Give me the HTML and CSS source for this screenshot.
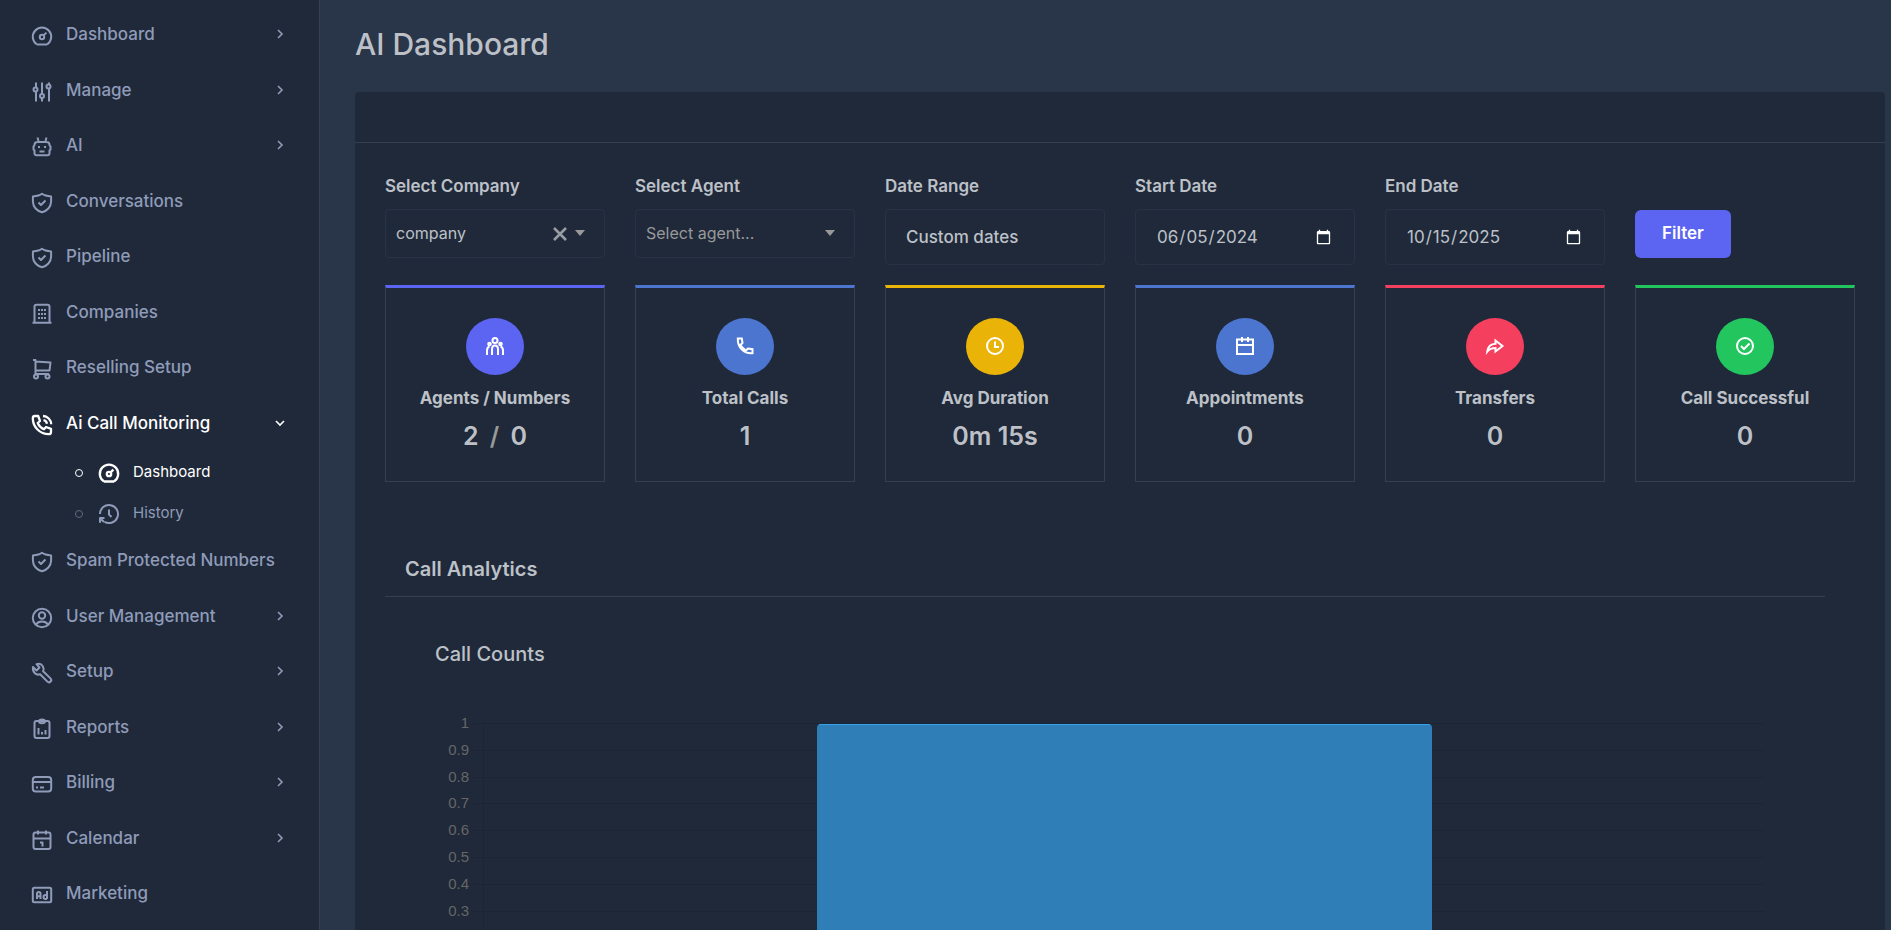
FILE: index.html
```html
<!DOCTYPE html>
<html lang="en">
<head>
<meta charset="utf-8">
<meta name="viewport" content="width=device-width, initial-scale=1">
<title>AI Dashboard</title>
<link rel="stylesheet" href="styles.css">
</head>
<body>
<svg class="sprite" aria-hidden="true">
  <symbol id="gauge" viewBox="0 0 24 24"><path d="M7 20.500h10M7 20.500A9.200 9.200 0 1 1 17 20.500"/><circle cx="12" cy="13" r="2.200"/><path d="m13.600 11.400 2.800-2.800"/></symbol>
  <symbol id="sliders" viewBox="0 0 24 24"><path d="M6 2.500v5M6 11.500V21.500M12 2.500V14M12 18v3.500M19 2.500v2M19 8.500V21.500"/><circle cx="5.500" cy="9.500" r="2"/><circle cx="12" cy="16" r="2"/><circle cx="18.500" cy="6.500" r="2"/></symbol>
  <symbol id="robot" viewBox="0 0 24 24"><path d="M7.500 2.500 8.500 6M16.500 2.500 15.500 6M7.500 7h9a3 3 0 0 1 3 3l1 1.500v3l-1 1v3a1.800 1.800 0 0 1-1.800 1.800H6.300a1.800 1.800 0 0 1-1.800-1.800V15.500l-1-1v-3l1-1.500a3 3 0 0 1 3-3z"/><path d="M8 12h2M14 12h2M9.500 16.500h5"/></symbol>
  <symbol id="shield" viewBox="0 0 24 24"><path d="M12 2.800C9.800 4.600 6.500 5.200 2.900 5.400v5.200c0 5.400 4.200 9.400 9.100 10.600 4.900-1.200 9.100-5.200 9.100-10.600V5.400C17.500 5.200 14.200 4.600 12 2.800z"/><path d="m8.500 11.500 2.500 2.500 4.500-4.500"/></symbol>
  <symbol id="building" viewBox="0 0 24 24"><path d="M2.500 20.800h19M4.500 20.500v-16A1.800 1.800 0 0 1 6.300 2.800h11.400a1.800 1.800 0 0 1 1.800 1.700v16"/><path d="M8 8h2M11 8h2M14 8h2M8 12h2M11 12h2M14 12h2M8 16h2M11 16h2M14 16h2"/></symbol>
  <symbol id="cart" viewBox="0 0 24 24"><path d="M3 3h2.500v13.500M5.500 4.500 20.500 5.500 19.500 13.500H5.500M4.500 17H19"/><circle cx="6" cy="19.500" r="2"/><circle cx="17.500" cy="19.500" r="2"/></symbol>
  <symbol id="callwave" viewBox="0 0 24 24"><path d="M5 3h3.200l1.800 5-2.300 2c1.200 3 3.300 5 6.300 6.300l2-2.300 5 1.800V19c0 1.200-1 2.200-2.200 2.200C10 21.200 2.800 14 2.800 5.200 2.800 4 3.800 3 5 3zM13 3a8.500 8.500 0 0 1 8.200 8.200M13.500 7.200a4.500 4.500 0 0 1 3.500 3.500"/></symbol>
  <symbol id="history" viewBox="0 0 24 24"><path d="M3 12a9 9 0 1 1 4.500 7.800M7.500 16H3v4.800M3.500 16.500 7 20M12 7.500v5l2.500 2.500"/></symbol>
  <symbol id="user" viewBox="0 0 24 24"><circle cx="12" cy="12" r="9.200"/><circle cx="12" cy="9.500" r="3.200"/><path d="M6 18.500c1.300-2 3.500-3 6-3s4.700 1 6 3"/></symbol>
  <symbol id="wrench" viewBox="0 0 24 24"><path d="m3 6 3.500 3.500L9.500 6.500 6.500 3.200C9 2.200 11.500 3 12.800 5.200c1 1.700 1 3.400.3 5l7.400 7.200a2.200 2.200 0 0 1-3.100 3.200l-7.300-7.400c-3.600 1.500-8-1.700-7.100-7.200z"/></symbol>
  <symbol id="report" viewBox="0 0 24 24"><rect x="4.500" y="4" width="15" height="17" rx="2"/><path d="M9 4.500c0-1.200 1.200-2 3-2s3 .8 3 2-1.200 1.800-3 1.800-3-.6-3-1.800zM8.500 11v6.500M12 15v2.500M15.500 13v4.500"/></symbol>
  <symbol id="wallet" viewBox="0 0 24 24"><rect x="2.800" y="5" width="18.400" height="14.500" rx="3"/><path d="M3 10h18M6 15.500h2M10 15.500h4"/></symbol>
  <symbol id="calendar1" viewBox="0 0 24 24"><rect x="3.500" y="4.500" width="17" height="16.500" rx="2"/><path d="M8 2.500v4M16 2.500v4M3.500 10.500h17M10 14.500H12.500v4"/></symbol>
  <symbol id="ad" viewBox="0 0 24 24"><rect x="2.800" y="4.800" width="18.400" height="14.500" rx="1.500"/><path d="M7 16v-5.500c0-2 3.500-2 3.500 0V16M7 13.200h3.500M17 8v8M17 12h-1.500a2 2 0 0 0 0 4H17"/></symbol>
  <symbol id="chevron" viewBox="0 0 12 12"><path d="m4 2 4 4-4 4"/></symbol>
  <symbol id="caret" viewBox="0 0 10 6"><path d="M0 0h10L5 6z"/></symbol>
  <symbol id="cross" viewBox="0 0 14 14"><path d="m1 1 12 12M13 1 1 13"/></symbol>
  <symbol id="people" viewBox="0 0 24 24"><circle cx="12" cy="6.500" r="2.500"/><path d="M9 21v-5.500C9 13 10 11.500 12 11.500s3 1.500 3 4V21M6.500 12.500C4.700 13 4 14.500 4 16.500V21M17.500 12.500c1.800.5 2.500 2 2.500 4V21"/><circle cx="6.500" cy="10" r="1.300"/><circle cx="17.500" cy="10" r="1.300"/></symbol>
  <symbol id="phone" viewBox="0 0 24 24"><path d="M4.800 4.500h4L9.500 9l-2 2c1.500 2.500 3 4 5.500 5.500l2-2 4.500.7v4C11 20 4.500 13.500 4.800 4.500z"/></symbol>
  <symbol id="clock" viewBox="0 0 24 24"><circle cx="12" cy="12" r="8"/><path d="M12 7.500V13h4"/></symbol>
  <symbol id="calendar" viewBox="0 0 24 24"><path d="M4 5.500h16V20H4zM4 11h16M9 3v5M15 3v5"/></symbol>
  <symbol id="forward" viewBox="0 0 24 24"><path d="M12.500 6.500 19.500 12l-7 5.500V14c-4 0-6 .8-8.200 3.500C5 12.500 8 10 12.500 9.800z"/></symbol>
  <symbol id="success" viewBox="0 0 24 24"><circle cx="12" cy="12" r="8"/><path d="m8 12 3 3 5.500-5.500"/></symbol>
</svg>

<div class="app">
  <nav class="sidebar" aria-label="Main">
    <a class="nav-item" href="#"><svg class="icon"><use href="#gauge"/></svg><span>Dashboard</span><svg class="chevron"><use href="#chevron"/></svg></a>
    <a class="nav-item" href="#"><svg class="icon"><use href="#sliders"/></svg><span>Manage</span><svg class="chevron"><use href="#chevron"/></svg></a>
    <a class="nav-item" href="#"><svg class="icon"><use href="#robot"/></svg><span>AI</span><svg class="chevron"><use href="#chevron"/></svg></a>
    <a class="nav-item" href="#"><svg class="icon"><use href="#shield"/></svg><span>Conversations</span></a>
    <a class="nav-item" href="#"><svg class="icon"><use href="#shield"/></svg><span>Pipeline</span></a>
    <a class="nav-item" href="#"><svg class="icon"><use href="#building"/></svg><span>Companies</span></a>
    <a class="nav-item" href="#"><svg class="icon"><use href="#cart"/></svg><span>Reselling Setup</span></a>
    <a class="nav-item active open" href="#"><svg class="icon"><use href="#callwave"/></svg><span>Ai Call Monitoring</span><svg class="chevron"><use href="#chevron"/></svg></a>
    <div class="subnav">
      <a class="sub-item active" href="#"><i class="bullet"></i><svg class="icon"><use href="#gauge"/></svg><span>Dashboard</span></a>
      <a class="sub-item" href="#"><i class="bullet"></i><svg class="icon"><use href="#history"/></svg><span>History</span></a>
    </div>
    <a class="nav-item" href="#"><svg class="icon"><use href="#shield"/></svg><span>Spam Protected Numbers</span></a>
    <a class="nav-item" href="#"><svg class="icon"><use href="#user"/></svg><span>User Management</span><svg class="chevron"><use href="#chevron"/></svg></a>
    <a class="nav-item" href="#"><svg class="icon"><use href="#wrench"/></svg><span>Setup</span><svg class="chevron"><use href="#chevron"/></svg></a>
    <a class="nav-item" href="#"><svg class="icon"><use href="#report"/></svg><span>Reports</span><svg class="chevron"><use href="#chevron"/></svg></a>
    <a class="nav-item" href="#"><svg class="icon"><use href="#wallet"/></svg><span>Billing</span><svg class="chevron"><use href="#chevron"/></svg></a>
    <a class="nav-item" href="#"><svg class="icon"><use href="#calendar1"/></svg><span>Calendar</span><svg class="chevron"><use href="#chevron"/></svg></a>
    <a class="nav-item" href="#"><svg class="icon"><use href="#ad"/></svg><span>Marketing</span></a>
  </nav>

  <main class="main">
    <h1 class="page-title">AI Dashboard</h1>
    <section class="panel">
      <header class="panel-head"></header>
      <div class="panel-body">
        <form class="filters">
          <div class="field">
            <label for="company">Select Company</label>
            <div class="combo">
              <select id="company"><option>company</option></select>
              <button class="clear" type="button" aria-label="Clear company"><svg><use href="#cross"/></svg></button>
              <svg class="caret"><use href="#caret"/></svg>
            </div>
          </div>
          <div class="field">
            <label for="agent">Select Agent</label>
            <div class="combo">
              <select id="agent" class="empty"><option>Select agent...</option></select>
              <svg class="caret"><use href="#caret"/></svg>
            </div>
          </div>
          <div class="field">
            <label for="range">Date Range</label>
            <select id="range" class="control"><option>Custom dates</option></select>
          </div>
          <div class="field">
            <label for="start">Start Date</label>
            <input id="start" class="control" type="date" value="2024-06-05">
          </div>
          <div class="field">
            <label for="end">End Date</label>
            <input id="end" class="control" type="date" value="2025-10-15">
          </div>
          <div class="action"><button class="btn" type="button">Filter</button></div>
        </form>

        <div class="stats">
          <article class="stat indigo"><div class="badge"><svg><use href="#people"/></svg></div><h2>Agents / Numbers</h2><p>2 <span class="slash">/</span> 0</p></article>
          <article class="stat blue"><div class="badge"><svg><use href="#phone"/></svg></div><h2>Total Calls</h2><p>1</p></article>
          <article class="stat amber"><div class="badge"><svg><use href="#clock"/></svg></div><h2>Avg Duration</h2><p>0m 15s</p></article>
          <article class="stat blue"><div class="badge"><svg><use href="#calendar"/></svg></div><h2>Appointments</h2><p>0</p></article>
          <article class="stat red"><div class="badge"><svg><use href="#forward"/></svg></div><h2>Transfers</h2><p>0</p></article>
          <article class="stat green"><div class="badge"><svg><use href="#success"/></svg></div><h2>Call Successful</h2><p>0</p></article>
        </div>

        <section class="analytics">
          <h2 class="section-title">Call Analytics</h2>
          <div class="chart-card">
            <h3>Call Counts</h3>
            <div class="chart">
              <div class="rows">
                <div class="row"><span>1</span></div>
                <div class="row"><span>0.9</span></div>
                <div class="row"><span>0.8</span></div>
                <div class="row"><span>0.7</span></div>
                <div class="row"><span>0.6</span></div>
                <div class="row"><span>0.5</span></div>
                <div class="row"><span>0.4</span></div>
                <div class="row"><span>0.3</span></div>
                <div class="row"><span>0.2</span></div>
                <div class="row"><span>0.1</span></div>
              </div>
              <div class="plot"><div class="bar"></div></div>
            </div>
          </div>
        </section>
      </div>
    </section>
  </main>
</div>
</body>
</html>
```
FILE: styles.css
```css
:root {
  --surface: #1f293a;
  --canvas: #293548;
  --line: #343f50;
  --field-line: #273345;
  --text: #bdc1c7;
  --muted: #8f9bb8;
}

* { box-sizing: border-box; }

body {
  margin: 0;
  background: var(--canvas);
  color: var(--text);
  font: 17px/1.5 Inter, "Liberation Sans", sans-serif;
}

h1, h2, h3, p { margin: 0; }

svg { fill: none; stroke: currentColor; stroke-width: 2; }

.sprite { display: none; }

.app { display: flex; height: 100vh; overflow: hidden; }

/* Sidebar */
.sidebar {
  flex: 0 0 320px;
  padding-top: 7px;
  overflow: hidden;
  background: var(--surface);
  border-right: 1px solid var(--line);
}

.nav-item, .sub-item {
  display: flex;
  align-items: flex-start;
  gap: 12px;
  color: var(--muted);
  text-decoration: none;
}

.nav-item { padding: 15px 33px 15px 30px; font-weight: 500; }
.nav-item.active, .sub-item.active { color: #fff; }

.icon {
  flex: none;
  width: 24px;
  height: 24px;
  margin: 2px 0 -2px;
  stroke-linejoin: round;
}

.active .icon { stroke-width: 2.3; }

.chevron {
  width: 12px;
  height: 12px;
  margin: 0 0 1px auto;
  align-self: center;
  stroke-width: 1.6;
}

.open .chevron { transform: rotate(90deg); }

.subnav { display: grid; grid-auto-rows: 41px; }

.sub-item {
  align-items: center;
  padding: 2px 30px 0 75px;
  font-size: 15px;
}

.bullet {
  width: 8px;
  height: 8px;
  margin-right: 2px;
  border: 1px solid #5f6b80;
  border-radius: 50%;
}

.active .bullet { border-color: #fff; }
.sub-item .icon { margin: 1px 0 0; }

/* Main column */
.main {
  flex: 1;
  min-width: 0;
  padding: 26px 6px 0 35px;
  overflow: hidden;
}

.page-title { font-size: 30px; font-weight: 500; line-height: 36px; }

.panel {
  margin-top: 30px;
  background: var(--surface);
  border-radius: 4px;
}

.panel-head { height: 51px; border-bottom: 1px solid var(--line); }
.panel-body { padding: 31px 30px 30px; }

.filters, .stats {
  display: grid;
  grid-template-columns: repeat(6, minmax(0, 1fr));
  gap: 30px;
}

.field { display: flex; flex-direction: column; gap: 9px; }
.field label { font-weight: 600; }

.combo { display: grid; grid-template-columns: 1fr auto auto; align-items: center; }

.combo select, .control {
  width: 100%;
  color: var(--text);
  background: transparent;
  border: 1px solid var(--field-line);
  border-radius: 4px;
  appearance: none;
  font: inherit;
  color-scheme: dark;
}

.combo select {
  grid-area: 1 / 1 / 2 / 4;
  height: 49px;
  padding: 0 60px 0 10px;
  font-size: 16px;
}

.combo select.empty { color: #999; }
.control { height: 56px; padding: 2px 20px 0; }
select.control { font-weight: 500; }

.clear {
  grid-area: 1 / 2;
  display: flex;
  margin-right: 8px;
  padding: 2px 0 0;
  color: #999da3;
  background: none;
  border: 0;
}

.clear svg { width: 14px; height: 14px; stroke-width: 2.6; }

.caret {
  grid-area: 1 / 3;
  width: 10px;
  height: 6px;
  margin-right: 20px;
  color: #999;
  fill: currentColor;
  stroke: none;
  pointer-events: none;
}

.action { padding-top: 36px; }

.btn {
  height: 48px;
  padding: 0 27px 2px;
  color: #fff;
  background: #5b65f1;
  border: 0;
  border-radius: 6px;
  font: 600 17px/24px Inter, "Liberation Sans", sans-serif;
}

/* Stat cards */
.stats { margin-top: 20px; }

.stat {
  padding: 30px 10px 29px;
  border: 1px solid var(--line);
  border-top: 3px solid var(--accent);
  text-align: center;
}

.indigo { --accent: #5b65f1; }
.blue { --accent: #4c75cf; }
.amber { --accent: #eab308; }
.red { --accent: #f43f5e; }
.green { --accent: #22c55e; }

.badge {
  display: grid;
  place-items: center;
  width: 58px;
  height: 57px;
  margin: 0 auto 11px;
  color: #fff;
  background: var(--accent);
  border-radius: 50%;
}

.badge svg { width: 24px; height: 24px; }
.stat h2 { font-size: 17px; font-weight: 700; }
.stat p { margin-top: 10px; font-size: 25px; font-weight: 600; line-height: 31px; }
.slash { margin: 0 5px; color: #999; }

/* Analytics */
.analytics { margin: 75px 30px 0 0; }

.section-title {
  padding: 0 20px 15px;
  border-bottom: 1px solid var(--line);
  font-size: 20px;
  font-weight: 600;
  line-height: 24px;
}

.chart-card { padding: 45px 60px 60px 50px; }
.chart-card h3 { font-size: 20px; font-weight: 500; line-height: 24px; }

.chart {
  display: grid;
  grid-template-columns: 34px 14px 1fr;
  height: 268px;
  margin-top: 57px;
  color: #666;
  font: 15px/20px "Liberation Sans", sans-serif;
}

.rows {
  grid-area: 1 / 1 / 2 / 4;
  display: grid;
  grid-template-rows: repeat(10, minmax(0, 1fr));
}

.row {
  display: grid;
  grid-template-columns: 34px 1fr;
  column-gap: 5px;
}

.row span { margin-top: -10px; text-align: right; }
.row::after { content: ""; border-top: 1px solid #1b2535; }

.plot {
  grid-area: 1 / 3;
  display: flex;
  justify-content: center;
  padding-top: 1px;
  border-left: 1px solid #1b2535;
}

.bar {
  width: 48%;
  background: #2f7eb8;
  border: 1px solid #2f7eb8;
  border-top-color: #36a2eb;
  border-radius: 4px 4px 0 0;
}
```
